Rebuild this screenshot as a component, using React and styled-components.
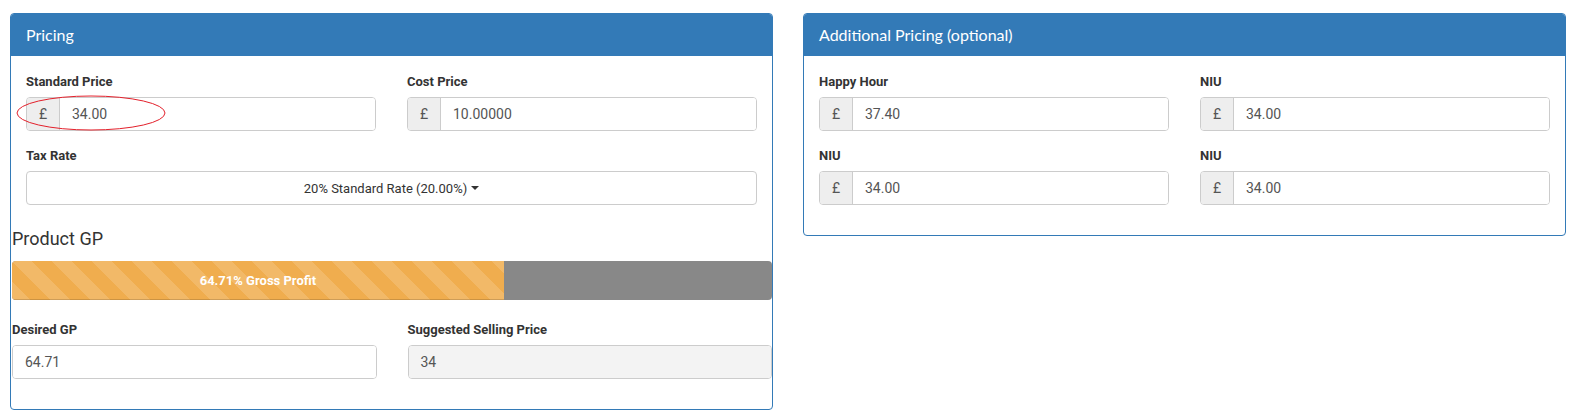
import React from 'react';
import styled, { createGlobalStyle } from 'styled-components';

const GlobalStyle = createGlobalStyle`
  body {
    margin: 0;
    background: #fff;
    font-family: Roboto, "Liberation Sans", sans-serif;
    color: #333;
  }
`;

const Page = styled.div`
  display: grid;
  grid-template-columns: 763px 763px;
  column-gap: 30px;
  align-items: start;
  padding: 13px 0 0 10px;
`;

const Panel = styled.section`
  border: 1px solid #337ab7;
  border-radius: 4px;
  background: #fff;
  position: relative;
`;

const PanelHeading = styled.header`
  background: #337ab7;
  color: #fff;
  height: 42px;
  display: flex;
  align-items: center;
  padding: 0 15px 2px;
  box-sizing: border-box;
  font-family: Lato, "Open Sans", sans-serif;
  font-size: 16px;
  border-radius: 3px 3px 0 0;
`;

const PanelBody = styled.div`
  padding: 16px 15px ${(p) => (p.$bottom ? `${p.$bottom}px` : '0')};
`;

const FieldGrid = styled.div`
  display: grid;
  grid-template-columns: 1fr 1fr;
  column-gap: 31px;
  row-gap: 15px;
`;

const Field = styled.div`
  display: flex;
  flex-direction: column;
  grid-column: ${(p) => (p.$wide ? '1 / -1' : 'auto')};
`;

const Label = styled.label`
  font-weight: 700;
  font-size: 13px;
  line-height: 20px;
  margin-bottom: 5px;
`;

const InputGroup = styled.div`
  display: flex;
  height: 34px;
  border: 1px solid #ccc;
  border-radius: 4px;
  overflow: hidden;
  box-sizing: border-box;
`;

const Addon = styled.span`
  width: 32px;
  flex: none;
  display: flex;
  align-items: center;
  justify-content: center;
  background: #eee;
  border-right: 1px solid #ccc;
  color: #555;
  font-size: 14px;
`;

const Value = styled.span`
  flex: 1;
  display: flex;
  align-items: center;
  padding: 0 12px;
  font-size: 14px;
  color: #555;
  background: ${(p) => (p.$readOnly ? '#f3f3f3' : '#fff')};
`;

const SelectButton = styled.div`
  height: 34px;
  box-sizing: border-box;
  border: 1px solid #ccc;
  border-radius: 4px;
  display: flex;
  align-items: center;
  justify-content: center;
  font-size: 13px;
  color: #333;
`;

const Caret = styled.span`
  display: inline-block;
  margin-left: 4px;
  border-top: 4px solid #333;
  border-left: 4px solid transparent;
  border-right: 4px solid transparent;
`;

const GpSection = styled.div`
  padding: 22px 0 30px 1px;
`;

const GpTitle = styled.h3`
  margin: 0 0 10px;
  font-size: 18px;
  font-weight: 400;
  line-height: 24px;
  color: #333;
`;

const Progress = styled.div`
  height: 39px;
  background: #888;
  border-radius: 4px;
  overflow: hidden;
  display: flex;
`;

const ProgressBar = styled.div`
  background-color: #f0ad4e;
  background-image: linear-gradient(
    45deg,
    rgba(255, 255, 255, 0.15) 25%,
    transparent 25%,
    transparent 50%,
    rgba(255, 255, 255, 0.15) 50%,
    rgba(255, 255, 255, 0.15) 75%,
    transparent 75%,
    transparent
  );
  background-size: 40px 40px;
  box-shadow: inset 0 -1px 0 rgba(0, 0, 0, 0.15);
  color: #fff;
  font-weight: 700;
  font-size: 13px;
  display: flex;
  align-items: center;
  justify-content: center;
`;

const BottomGrid = styled(FieldGrid)`
  margin-top: 20px;
`;

const PlainInput = styled.div`
  height: 34px;
  box-sizing: border-box;
  border: 1px solid #ccc;
  border-radius: 4px;
  display: flex;
  overflow: hidden;
`;

const Annotation = styled.svg`
  position: absolute;
  left: 3px;
  top: 81px;
  pointer-events: none;
`;

function PriceInput({ label, value }) {
  return (
    <Field>
      <Label>{label}</Label>
      <InputGroup>
        <Addon>£</Addon>
        <Value>{value}</Value>
      </InputGroup>
    </Field>
  );
}

export default function App() {
  const gp = 64.71;
  return (
    <>
      <GlobalStyle />
      <Page>
        <Panel>
          <PanelHeading>Pricing</PanelHeading>
          <PanelBody>
            <FieldGrid>
              <PriceInput label="Standard Price" value="34.00" />
              <PriceInput label="Cost Price" value="10.00000" />
              <Field $wide>
                <Label>Tax Rate</Label>
                <SelectButton>
                  20% Standard Rate (20.00%)
                  <Caret />
                </SelectButton>
              </Field>
            </FieldGrid>
          </PanelBody>
          <GpSection>
            <GpTitle>Product GP</GpTitle>
            <Progress>
              <ProgressBar style={{ width: `${gp}%` }}>{gp}% Gross Profit</ProgressBar>
            </Progress>
            <BottomGrid>
              <Field>
                <Label>Desired GP</Label>
                <PlainInput>
                  <Value>64.71</Value>
                </PlainInput>
              </Field>
              <Field>
                <Label>Suggested Selling Price</Label>
                <PlainInput>
                  <Value $readOnly>34</Value>
                </PlainInput>
              </Field>
            </BottomGrid>
          </GpSection>
          <Annotation width="154" height="38" viewBox="0 0 154 38">
            <ellipse cx="77" cy="18" rx="74" ry="17" fill="none" stroke="#e3202b" strokeWidth="1" />
          </Annotation>
        </Panel>
        <Panel>
          <PanelHeading>Additional Pricing (optional)</PanelHeading>
          <PanelBody $bottom={30}>
            <FieldGrid>
              <PriceInput label="Happy Hour" value="37.40" />
              <PriceInput label="NIU" value="34.00" />
              <PriceInput label="NIU" value="34.00" />
              <PriceInput label="NIU" value="34.00" />
            </FieldGrid>
          </PanelBody>
        </Panel>
      </Page>
    </>
  );
}
